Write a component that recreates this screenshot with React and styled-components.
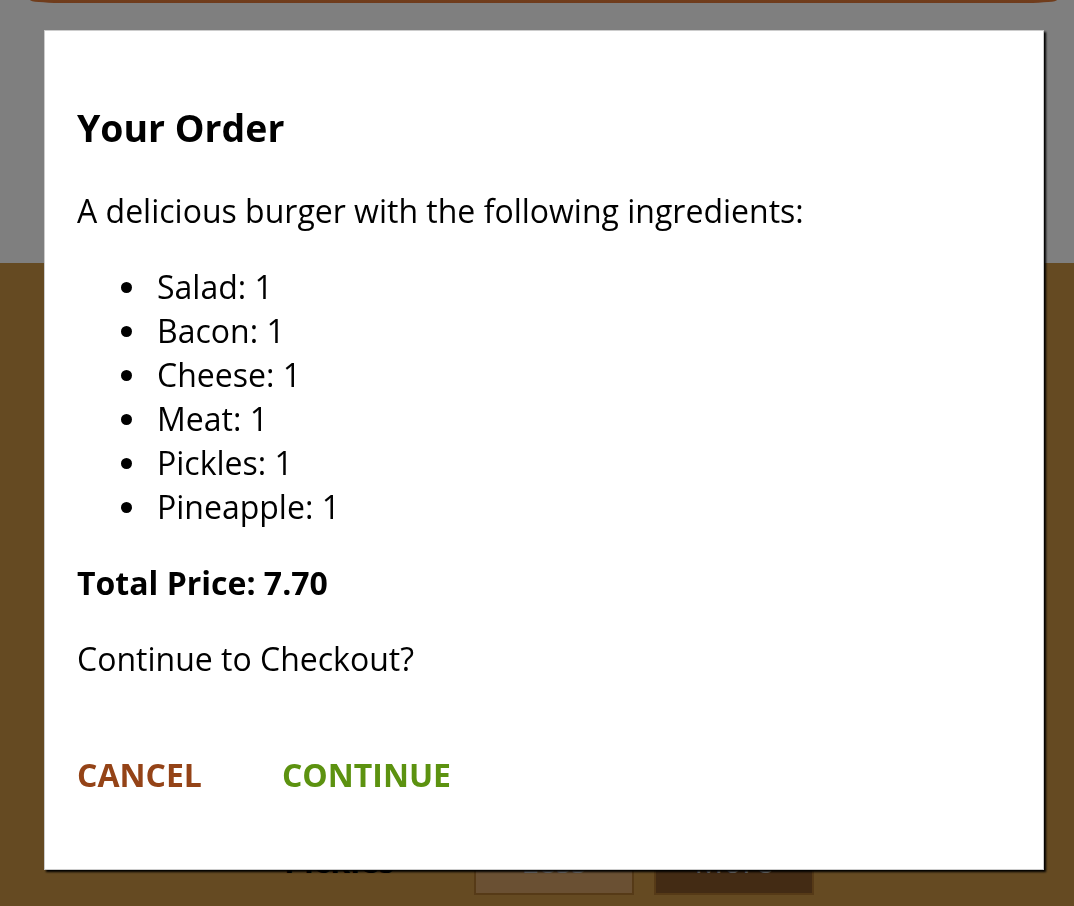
import React from "react";
import styled, { createGlobalStyle, css } from "styled-components";

const GlobalStyle = createGlobalStyle`
  html, body {
    margin: 0;
    padding: 0;
    height: 100%;
    overflow: hidden;
  }
  body {
    font-family: "Open Sans", "Noto Sans", sans-serif;
    font-size: 32px;
    line-height: 44px;
    color: #000;
  }
  * { box-sizing: border-box; }
`;

const Page = styled.div`
  height: 906px;
  display: flex;
  flex-direction: column;
  overflow: hidden;
`;

const BurgerArea = styled.div`
  height: 263px;
  background: #fff;
  display: flex;
  justify-content: center;
  padding-left: 13px;
`;

const BreadBottom = styled.div`
  width: 1027px;
  height: 3px;
  border-radius: 0 0 30px 30px / 0 0 3px 3px;
  background: linear-gradient(#e27b36, #de773a);
`;

const BuildControls = styled.div`
  flex: 1;
  background: #ca9444;
  display: flex;
  flex-direction: column;
  align-items: center;
  padding: 54px 0 20px 14px;
  overflow: hidden;
`;

const Price = styled.p`
  margin: 0 0 32px;
`;

const ControlRow = styled.div`
  display: flex;
  align-items: center;
  margin: 10px 0;
`;

const Label = styled.div`
  width: 200px;
  padding: 20px;
  font-weight: bold;
`;

const ControlButton = styled.button`
  display: block;
  font: inherit;
  padding: 10px;
  margin: 0 10px;
  width: 160px;
  border: 2px solid #ac742e;
  color: #fff;
  outline: none;
  background-color: ${(p) => (p.$more ? "#865628" : "#d4a066")};
`;

const Backdrop = styled.div`
  position: fixed;
  inset: 0;
  z-index: 100;
  background: rgba(0, 0, 0, 0.5);
`;

const Modal = styled.div`
  position: fixed;
  z-index: 500;
  top: 30px;
  left: 44px;
  width: 1000px;
  background: #fff;
  border: 1px solid #ccc;
  box-shadow: 2px 2px 2px #000;
  padding: 32px;
`;

const Title = styled.h3`
  font-size: 37.44px;
  line-height: 51px;
  font-weight: bold;
  margin: 39px 0 36px;
`;

const Text = styled.p`
  margin: 32px 0;
`;

const IngredientList = styled.ul`
  margin: 32px 0;
  padding-left: 80px;
  list-style: none;
`;

const Ingredient = styled.li`
  position: relative;

  &::before {
    content: "";
    position: absolute;
    left: -36px;
    top: 17px;
    width: 11px;
    height: 11px;
    border-radius: 50%;
    background: #000;
  }
`;

const ActionButton = styled.button`
  background: transparent;
  border: none;
  outline: none;
  cursor: pointer;
  font: inherit;
  font-weight: bold;
  padding: 20px;
  margin: 20px;
  ${(p) =>
    p.$kind === "success"
      ? css`color: #5c9210;`
      : css`color: #944317;`}

  &:first-of-type {
    margin-left: 0;
    padding-left: 0;
  }
`;

const ingredients = {
  salad: 1,
  bacon: 1,
  cheese: 1,
  meat: 1,
  pickles: 1,
  pineapple: 1,
};

const controls = ["Salad", "Bacon", "Cheese", "Meat", "Pickles", "Pineapple"];

const capitalize = (s) => s.charAt(0).toUpperCase() + s.slice(1);

const App = () => {
  return (
    <>
      <GlobalStyle />
      <Page>
        <BurgerArea>
          <BreadBottom />
        </BurgerArea>
        <BuildControls>
          <Price>
            Current Price: <strong>7.70</strong>
          </Price>
          {controls.map((label) => (
            <ControlRow key={label}>
              <Label>{label}</Label>
              <ControlButton>Less</ControlButton>
              <ControlButton $more>More</ControlButton>
            </ControlRow>
          ))}
        </BuildControls>
      </Page>
      <Backdrop />
      <Modal>
        <Title>Your Order</Title>
        <Text>A delicious burger with the following ingredients:</Text>
        <IngredientList>
          {Object.keys(ingredients).map((key) => (
            <Ingredient key={key}>
              {capitalize(key)}: {ingredients[key]}
            </Ingredient>
          ))}
        </IngredientList>
        <Text>
          <strong>Total Price: 7.70</strong>
        </Text>
        <Text>Continue to Checkout?</Text>
        <ActionButton $kind="danger">CANCEL</ActionButton>
        <ActionButton $kind="success">CONTINUE</ActionButton>
      </Modal>
    </>
  );
};

export default App;
